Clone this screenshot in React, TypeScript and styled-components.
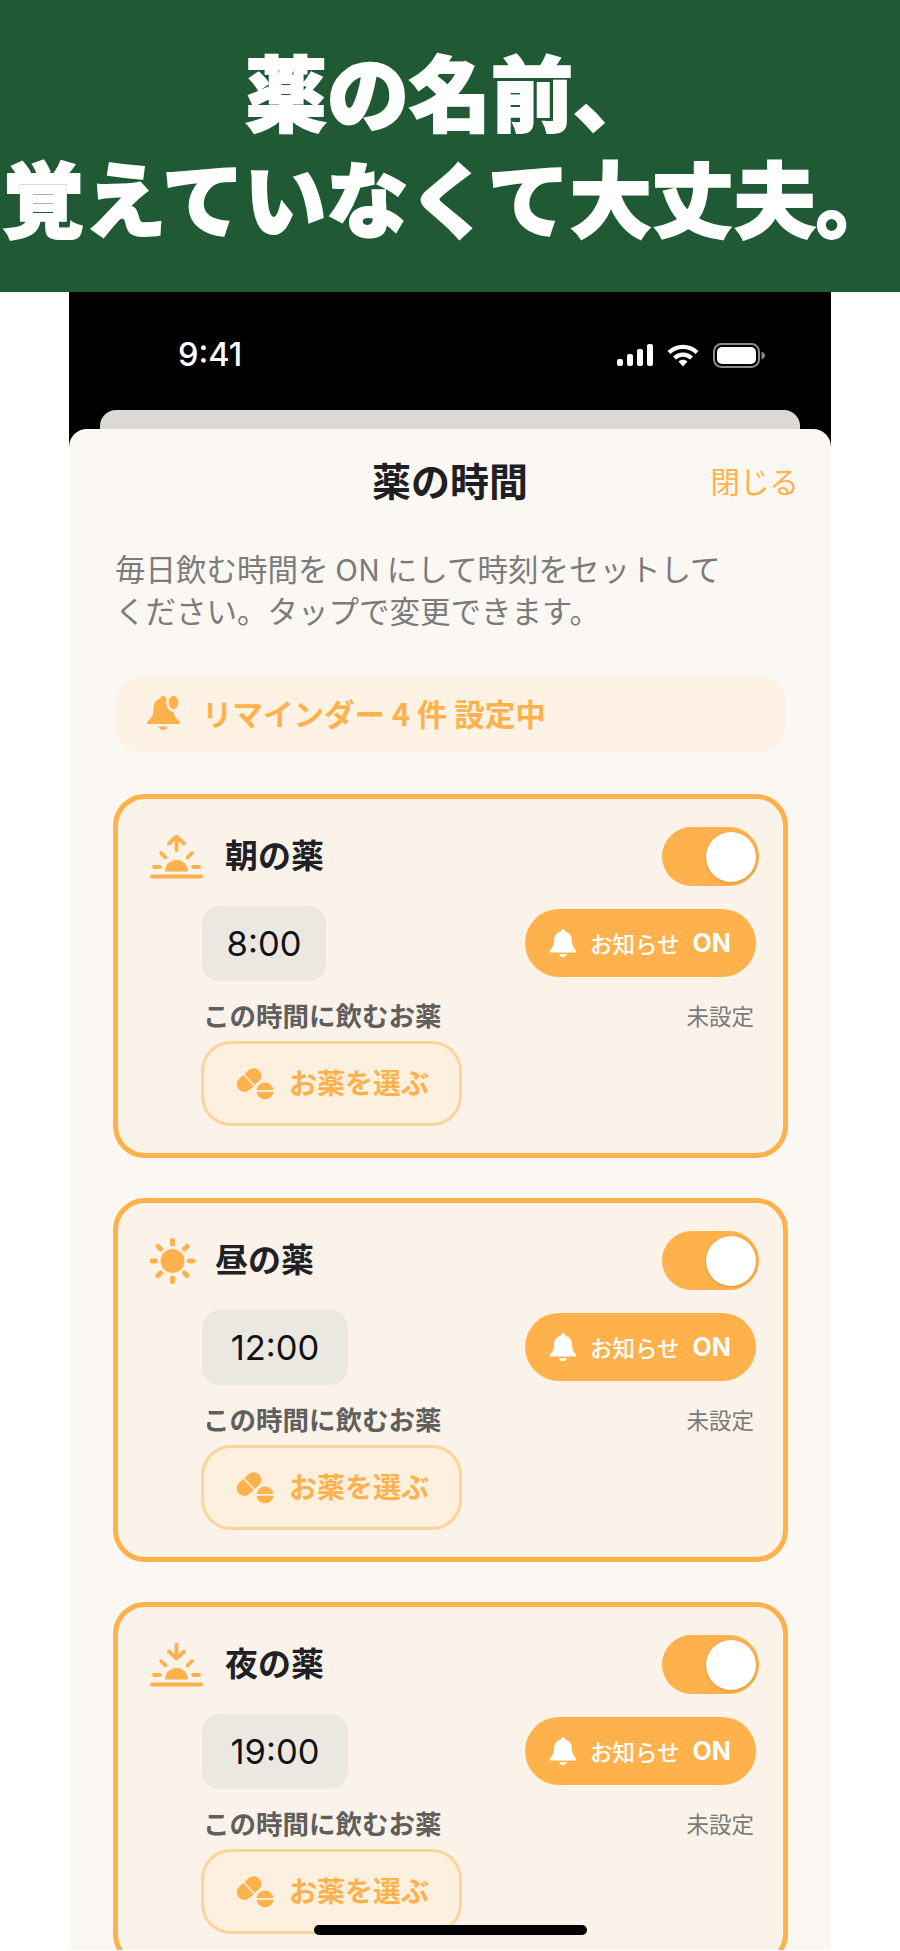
import React from 'react';
import styled, { createGlobalStyle } from 'styled-components';

const orange = '#FFB24C';
const cjk = `'Noto Sans CJK JP', 'Noto Sans', sans-serif`;

const GlobalStyle = createGlobalStyle`
  html, body {
    margin: 0;
    padding: 0;
    background: #ffffff;
    font-family: ${cjk};
  }
`;

const Page = styled.div`
  position: relative;
  width: 900px;
  height: 1951px;
  overflow: hidden;
  background: #ffffff;
`;

const Banner = styled.header`
  height: 292px;
  box-sizing: border-box;
  padding-top: 37px;
  background: #205a35;
  color: #ffffff;
  text-align: center;
  font-size: 82px;
  font-weight: 900;
  line-height: 106px;
  white-space: nowrap;
  -webkit-text-stroke: 2px #ffffff;
`;

const Phone = styled.div`
  height: 1658px;
  margin: 0 69px;
  background: #000000;
  display: flex;
  flex-direction: column;
  overflow: hidden;
`;

const StatusBar = styled.div`
  height: 118px;
  flex: none;
  box-sizing: border-box;
  padding: 45px 66px 0 109px;
  display: flex;
  justify-content: space-between;
  align-items: flex-start;
`;

const Clock = styled.span`
  font-family: Inter, sans-serif;
  font-size: 32.5px;
  font-weight: 500;
  line-height: 36px;
  color: #ffffff;
`;

const StatusIcons = styled.div`
  display: flex;
  align-items: center;
  gap: 14px;
  height: 36px;
`;

const BackSheet = styled.div`
  flex: none;
  height: 19px;
  margin: 0 31px;
  border-radius: 16px 16px 0 0;
  background: #dcd9d5;
`;

const Sheet = styled.main`
  flex: 1;
  box-sizing: border-box;
  border-radius: 18px 18px 0 0;
  background: #fbf8f4;
  padding-top: 27px;
  overflow: hidden;
`;

const SheetHeader = styled.div`
  position: relative;
  height: 48px;
  display: flex;
  justify-content: center;
  align-items: center;
`;

const SheetTitle = styled.h1`
  margin: 0 0 2px;
  font-size: 39px;
  font-weight: 700;
  color: #1f2024;
`;

const CloseLink = styled.span`
  position: absolute;
  right: 32px;
  top: 4px;
  font-size: 29.5px;
  line-height: 40px;
  color: ${orange};
`;

const Description = styled.p`
  margin: 43px 20px 0 46px;
  font-size: 30.5px;
  line-height: 42px;
  color: #7b7b7b;
`;

const ReminderBar = styled.div`
  height: 76px;
  box-sizing: border-box;
  margin: 45px 45px 0 46px;
  padding: 0 0 2px 31px;
  border-radius: 26px;
  background: #fdf2e3;
  display: flex;
  align-items: center;
  gap: 18px;
  font-size: 30.5px;
  font-weight: 700;
  color: ${orange};
`;

const CardList = styled.div`
  margin: 42px 43px 0 44px;
  display: flex;
  flex-direction: column;
  gap: 40px;
`;

const Card = styled.section`
  height: 364px;
  flex: none;
  box-sizing: border-box;
  padding: 28px 24px 0 32px;
  border: 5px solid ${orange};
  border-radius: 32px;
  background: #fbf3e9;
`;

const CardTop = styled.div`
  height: 59px;
  display: flex;
  align-items: center;
  justify-content: space-between;
`;

const CardHeading = styled.div<{ $tight?: boolean }>`
  display: flex;
  align-items: center;
  gap: ${(p) => (p.$tight ? 19 : 22)}px;
`;

const CardTitle = styled.h2`
  margin: 0 0 5px;
  font-size: 33px;
  font-weight: 700;
  color: #202126;
`;

const Toggle = styled.div`
  width: 97px;
  height: 59px;
  box-sizing: border-box;
  padding: 5px 3px;
  border-radius: 30px;
  background: ${orange};
  display: flex;
  justify-content: flex-end;
`;

const Knob = styled.span`
  width: 50px;
  height: 50px;
  border-radius: 50%;
  background: #ffffff;
  box-shadow: 0 1px 3px rgba(120, 80, 20, 0.3);
`;

const CardBody = styled.div`
  margin: 20px 3px 0 52px;
`;

const TimeRow = styled.div`
  height: 75px;
  display: flex;
  justify-content: space-between;
  align-items: center;
`;

const TimeBox = styled.div<{ $wide?: boolean }>`
  width: ${(p) => (p.$wide ? 146 : 124)}px;
  height: 75px;
  border-radius: 18px;
  background: #eae8e1;
  display: flex;
  align-items: center;
  justify-content: center;
  font-family: Inter, sans-serif;
  font-size: 34.5px;
  color: #111114;
`;

const NotifyPill = styled.div`
  width: 231px;
  height: 68px;
  margin-bottom: 2px;
  box-sizing: border-box;
  padding-left: 23px;
  border-radius: 34px;
  background: ${orange};
  color: #ffffff;
  display: flex;
  align-items: center;
  font-size: 22.5px;
  font-weight: 500;
`;

const NotifyLabel = styled.span`
  margin-left: 12px;
`;

const NotifyState = styled.span`
  margin-left: 13px;
  font-family: Inter, sans-serif;
  font-size: 25px;
  font-weight: 700;
`;

const MedsRow = styled.div`
  margin-top: 19px;
  height: 34px;
  box-sizing: border-box;
  padding: 0 2px 5px 1px;
  display: flex;
  justify-content: space-between;
  align-items: center;
`;

const MedsLabel = styled.span`
  font-size: 26.5px;
  font-weight: 700;
  color: #5f5f60;
`;

const MedsValue = styled.span`
  font-size: 22.5px;
  color: #7a7a78;
`;

const PickButton = styled.button`
  margin-top: 7px;
  margin-left: -1px;
  width: 261px;
  height: 85px;
  box-sizing: border-box;
  padding: 0 0 0 32px;
  border: 3px solid #fbd49c;
  border-radius: 30px;
  background: #fdf0de;
  color: ${orange};
  display: flex;
  align-items: center;
  gap: 15px;
  font-family: ${cjk};
  font-size: 28px;
  font-weight: 700;
`;

const PickLabel = styled.span`
  margin-bottom: 4px;
`;

const HomeIndicator = styled.div`
  position: absolute;
  left: 314px;
  top: 1925px;
  width: 273px;
  height: 10px;
  border-radius: 5px;
  background: #000000;
`;

const SignalIcon = () => (
  <svg width="36" height="22" viewBox="0 0 36 22" fill="#fff">
    <rect x="0" y="15" width="6" height="7" rx="2" />
    <rect x="10" y="10" width="6" height="12" rx="2" />
    <rect x="20" y="5" width="6" height="17" rx="2" />
    <rect x="30" y="0" width="6" height="22" rx="2" />
  </svg>
);

const WifiIcon = () => (
  <svg width="32" height="23" viewBox="0 0 32 23" fill="none" stroke="#fff" strokeWidth="4.2">
    <path d="M2 8.500C10 1 22 1 30 8.500" />
    <path d="M7.500 14C12.500 9.500 19.500 9.500 24.500 14" />
    <path d="M11.500 17.500L16 22.500L20.500 17.500C18 15 14 15 11.500 17.500Z" fill="#fff" stroke="none" />
  </svg>
);

const BatteryIcon = () => (
  <svg width="52" height="25" viewBox="0 0 52 25">
    <rect x="1" y="1" width="45" height="23" rx="7.500" fill="none" stroke="#8a8a8a" strokeWidth="2" />
    <rect x="4" y="4" width="39" height="17" rx="5" fill="#fff" />
    <path d="M48.500 8.500C50.500 9.300 52 10.500 52 12.500C52 14.500 50.500 15.700 48.500 16.500Z" fill="#8a8a8a" />
  </svg>
);

const BellIcon = () => (
  <svg width="30" height="30" viewBox="0 0 24 24" fill="#fff">
    <path d="M12 1a2 2 0 0 1 2 1.900c3.300.9 5.200 3.700 5.200 7.300 0 4 1.300 5.900 3.300 7.700.6.600.2 1.600-.6 1.600H2.100c-.8 0-1.200-1-.6-1.600 2-1.800 3.300-3.700 3.300-7.700 0-3.600 1.900-6.400 5.200-7.300A2 2 0 0 1 12 1z" />
    <path d="M8.800 21h6.400c-.3 1.300-1.600 2.300-3.200 2.300s-2.900-1-3.200-2.300z" />
  </svg>
);

const BadgeBellIcon = () => (
  <svg width="38" height="38" viewBox="0 0 38 38" fill={orange}>
    <path d="M17 2c1.800 0 3 1.200 3 2.700 4.800 1.200 7.500 5.500 7.500 10.800 0 6 2.500 9 6 12 1.200 1 .4 2.500-1 2.500H2.500c-1.400 0-2.200-1.500-1-2.500 3.500-3 6-6 6-12C7.500 10.200 9.200 5.900 14 4.700 14 3.200 15.200 2 17 2z" />
    <path d="M12.500 32.500h9c-.4 2-2.300 3.500-4.500 3.500s-4.100-1.500-4.500-3.500z" />
    <ellipse cx="27.500" cy="8.500" rx="6" ry="8" fill={orange} stroke="#fdf2e3" strokeWidth="2.500" />
  </svg>
);

const HorizonIcon = ({ down }: { down?: boolean }) => (
  <svg width="53" height="44" viewBox="0 0 53 44" fill="none" stroke={orange} strokeWidth="3.800" strokeLinecap="round" strokeLinejoin="round">
    <path d="M2 41.500H51" strokeWidth="4" />
    <path d="M15 36.500a11.500 11.500 0 0 1 23 0z" fill={orange} stroke="none" />
    <path d="M4 32H10M43 32H49M11 18L15.500 22.500M42 18L37.500 22.500" />
    {down ? (
      <path d="M26.500 1V15M19 8.500L26.500 15.500L34 8.500" />
    ) : (
      <path d="M26.500 2V15M19 8.500L26.500 1.500L34 8.500" />
    )}
  </svg>
);

const SunIcon = () => (
  <svg width="46" height="46" viewBox="0 0 46 46" fill="none" stroke={orange} strokeWidth="5" strokeLinecap="round">
    <circle cx="22.500" cy="23" r="12" fill={orange} stroke="none" />
    <path d="M22.500 2.500V6M22.500 40V43.500M2 23H5.500M39.500 23H43M8 8.500L10.500 11M34.500 35L37 37.500M8 37.500L10.500 35M34.500 11L37 8.500" />
  </svg>
);

const PillIcon = () => (
  <svg width="38" height="33" viewBox="0 0 38 33">
    <g transform="rotate(-42 13 13)">
      <rect x="-1" y="5.500" width="28" height="15" rx="7.500" fill={orange} />
      <rect x="12.200" y="5.500" width="1.600" height="15" fill="#fdf0de" />
    </g>
    <circle cx="29" cy="24" r="8.500" fill={orange} />
    <rect x="20" y="23" width="18" height="1.800" fill="#fdf0de" />
  </svg>
);

const slots = [
  { key: 'morning', title: '朝の薬', time: '8:00', icon: <HorizonIcon /> },
  { key: 'noon', title: '昼の薬', time: '12:00', wide: true, tight: true, icon: <SunIcon /> },
  { key: 'night', title: '夜の薬', time: '19:00', wide: true, icon: <HorizonIcon down /> },
];

const App = () => (
  <Page>
    <GlobalStyle />
    <Banner>
      薬の名前、
      <br />
      覚えていなくて大丈夫。
    </Banner>
    <Phone>
      <StatusBar>
        <Clock>9:41</Clock>
        <StatusIcons>
          <SignalIcon />
          <WifiIcon />
          <BatteryIcon />
        </StatusIcons>
      </StatusBar>
      <BackSheet />
      <Sheet>
        <SheetHeader>
          <SheetTitle>薬の時間</SheetTitle>
          <CloseLink>閉じる</CloseLink>
        </SheetHeader>
        <Description>
          毎日飲む時間を ON にして時刻をセットして
          <br />
          ください。タップで変更できます。
        </Description>
        <ReminderBar>
          <BadgeBellIcon />
          <span>リマインダー 4 件 設定中</span>
        </ReminderBar>
        <CardList>
          {slots.map((slot) => (
            <Card key={slot.key}>
              <CardTop>
                <CardHeading $tight={slot.tight}>
                  {slot.icon}
                  <CardTitle>{slot.title}</CardTitle>
                </CardHeading>
                <Toggle>
                  <Knob />
                </Toggle>
              </CardTop>
              <CardBody>
                <TimeRow>
                  <TimeBox $wide={slot.wide}>{slot.time}</TimeBox>
                  <NotifyPill>
                    <BellIcon />
                    <NotifyLabel>お知らせ</NotifyLabel>
                    <NotifyState>ON</NotifyState>
                  </NotifyPill>
                </TimeRow>
                <MedsRow>
                  <MedsLabel>この時間に飲むお薬</MedsLabel>
                  <MedsValue>未設定</MedsValue>
                </MedsRow>
                <PickButton>
                  <PillIcon />
                  <PickLabel>お薬を選ぶ</PickLabel>
                </PickButton>
              </CardBody>
            </Card>
          ))}
        </CardList>
      </Sheet>
    </Phone>
    <HomeIndicator />
  </Page>
);

export default App;
